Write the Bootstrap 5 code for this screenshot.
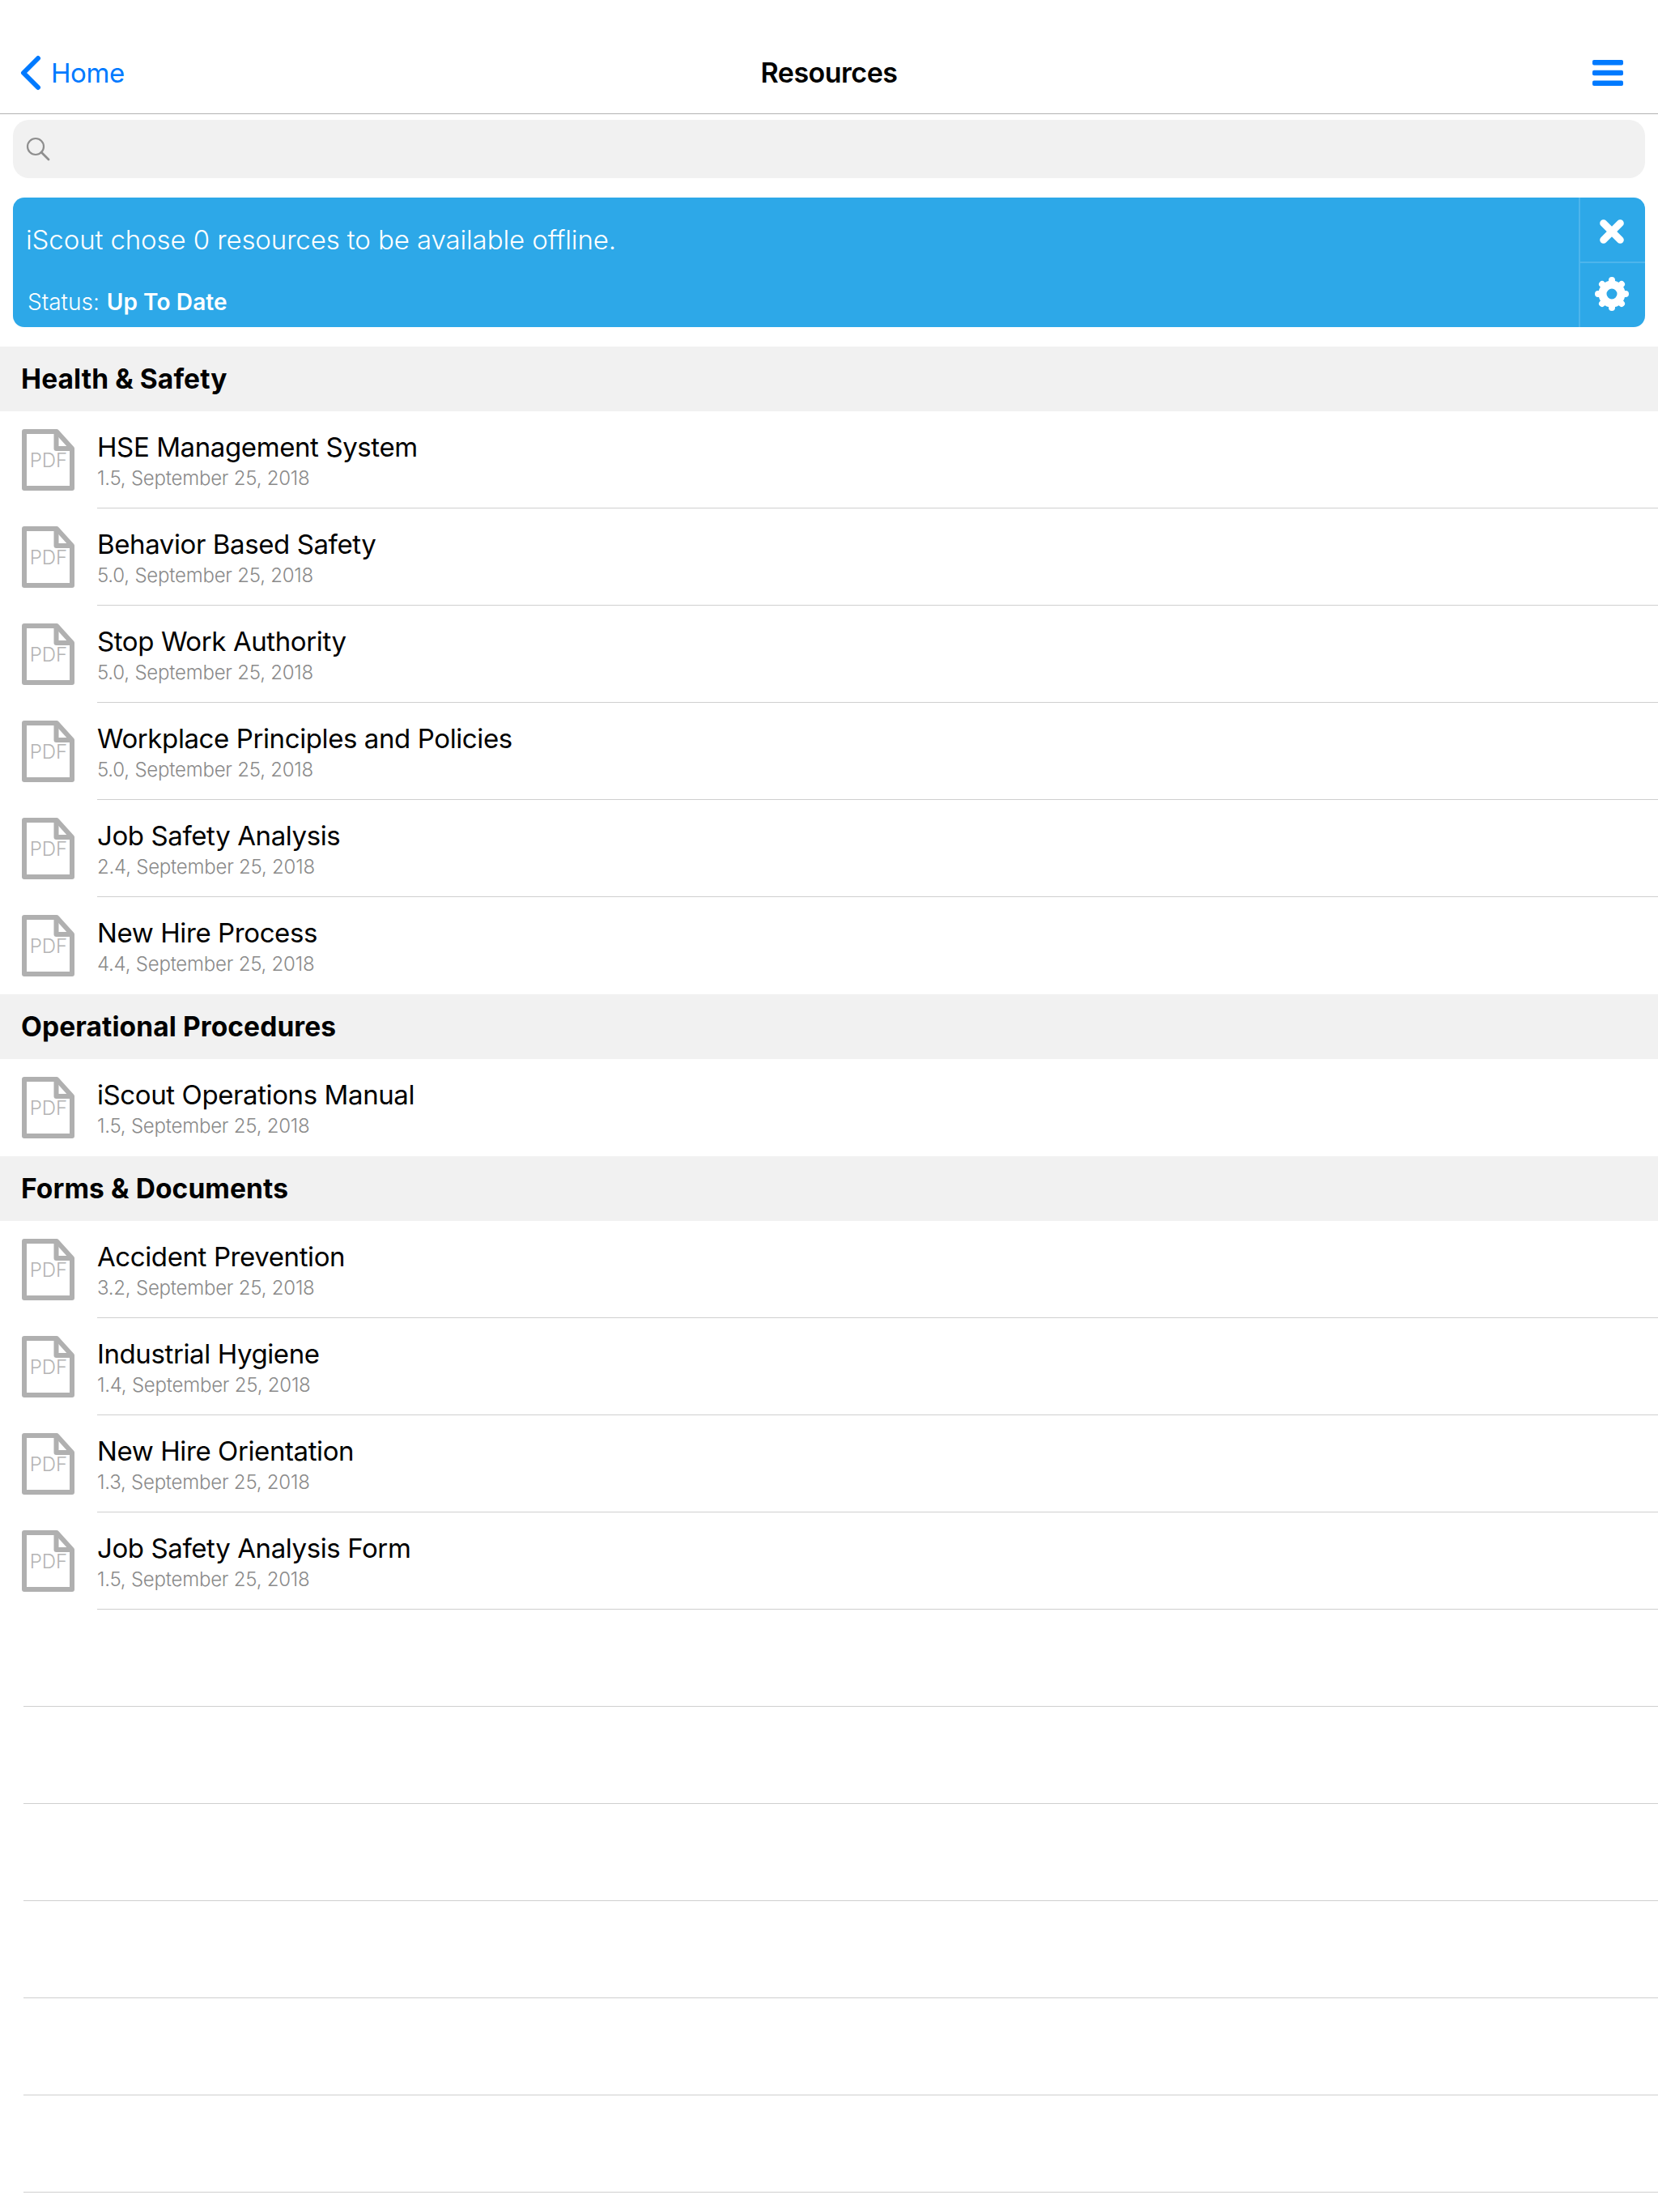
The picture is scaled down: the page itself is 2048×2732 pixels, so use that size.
<!DOCTYPE html>
<html lang="en">
<head>
<meta charset="utf-8">
<title>Resources</title>
<link href="https://cdn.jsdelivr.net/npm/bootstrap@5.3.0/dist/css/bootstrap.min.css" rel="stylesheet">
<style>
body{font-family:Inter,"Liberation Sans",sans-serif;background:#fff;color:#000;}
.top-nav{height:141px;padding:40px 43px 0 24px;border-bottom:1px solid #b2b2b2;}
.back-link{color:#007aff;font-size:33px;text-decoration:none;letter-spacing:-.4px;line-height:1;gap:11px;}
.nav-title{font-size:34px;font-weight:600;letter-spacing:-.5px;line-height:1;left:0;right:0;text-align:center;}
.search-box{height:72px;margin:7px 16px 0;background:#f1f1f1;border-radius:20px;padding-left:16px;}
.info-banner{height:160px;margin:24px 16px;background:#2da8e8;border-radius:14px;color:#fff;overflow:hidden;}
.banner-main{padding:32px 0 0 16px;}
.banner-title{font-size:33px;font-weight:300;line-height:40px;letter-spacing:-.1px;}
.banner-status{font-size:28px;line-height:34px;margin-top:40px;padding-left:2px;font-weight:300;}
.banner-status b{font-weight:600;margin-left:1px;letter-spacing:.1px;}
.banner-side{width:82px;border-left:2px solid #4db5ec;}
.side-btn{height:81px;padding:3px 2px 0 0;}
.side-btn+.side-btn{height:79px;padding:0 2px 3px 0;box-shadow:0 -2px 0 #4db5ec;}
.sec-head{height:80px;background:#f1f1f1;padding-left:26px;font-size:33.5px;font-weight:700;letter-spacing:.1px;}
.res-row{height:120px;padding-left:27px;}
.pdf-ico{width:66px;height:76px;flex:none;margin-right:27px;}
.pdf-ico text{font-family:Inter,"Liberation Sans",sans-serif;font-size:24px;fill:#b4b4b4;font-weight:300;}
.res-body{height:120px;border-bottom:1px solid #cfcfcf;padding-top:24px;}
.res-name{font-size:33px;line-height:40px;letter-spacing:-.4px;}
.res-meta{font-size:24px;line-height:30px;color:#8a8a8a;margin-top:4px;font-weight:300;letter-spacing:-.22px;}
.blank-row{height:120px;margin-left:29px;border-bottom:1px solid #cfcfcf;}
.res-row.last-sec .res-body{border-bottom:0;}
</style>
</head>
<body>
<nav class="top-nav d-flex align-items-center justify-content-between position-relative">
  <a class="back-link d-flex align-items-center" href="#">
    <svg width="28" height="44" viewBox="0 0 28 44"><path d="M23 4 5 22l18 18" fill="none" stroke="#007aff" stroke-width="6" stroke-linecap="round" stroke-linejoin="round"/></svg>
    <span>Home</span>
  </a>
  <div class="nav-title position-absolute">Resources</div>
  <svg width="38" height="32" viewBox="0 0 38 32"><rect y="0" width="38" height="6.500" rx="2" fill="#007aff"/><rect y="12.750" width="38" height="6.500" rx="2" fill="#007aff"/><rect y="25.500" width="38" height="6.500" rx="2" fill="#007aff"/></svg>
</nav>
<div class="search-box d-flex align-items-center">
  <svg width="30" height="30" viewBox="0 0 30 30"><circle cx="12" cy="12" r="10" fill="none" stroke="#8e8e8e" stroke-width="2.200"/><path d="M19 19l9 9" stroke="#8e8e8e" stroke-width="2.800" stroke-linecap="round"/></svg>
</div>
<div class="info-banner d-flex">
  <div class="banner-main flex-grow-1">
    <div class="banner-title">iScout chose 0 resources to be available offline.</div>
    <div class="banner-status">Status: <b>Up To Date</b></div>
  </div>
  <div class="banner-side d-flex flex-column">
    <div class="side-btn d-flex align-items-center justify-content-center">
      <svg width="32" height="32" viewBox="0 0 34 34"><path d="M6 6l22 22M28 6 6 28" stroke="#fff" stroke-width="9.500" stroke-linecap="round"/></svg>
    </div>
    <div class="side-btn d-flex align-items-center justify-content-center">
      <svg width="42" height="42" viewBox="0 0 42 42"><circle cx="21" cy="21" r="11.500" fill="none" stroke="#fff" stroke-width="10"/><g stroke="#fff" stroke-width="8" stroke-linecap="round"><path d="M21 4v4M21 34v4M4 21h4M34 21h4M9 9l3 3M30 30l3 3M33 9l-3 3M12 30l-3 3"/></g></svg>
    </div>
  </div>
</div>
<div id="list"></div>
<script>
const groups=[["Health & Safety",[["HSE Management System","1.5"],["Behavior Based Safety","5.0"],["Stop Work Authority","5.0"],["Workplace Principles and Policies","5.0"],["Job Safety Analysis","2.4"],["New Hire Process","4.4"]]],
["Operational Procedures",[["iScout Operations Manual","1.5"]]],
["Forms & Documents",[["Accident Prevention","3.2"],["Industrial Hygiene","1.4"],["New Hire Orientation","1.3"],["Job Safety Analysis Form","1.5"]]]];
const ico='<svg class="pdf-ico" viewBox="0 0 66 76"><path d="M3 3h40l19 21v49H3z" fill="#fff" stroke="#b0b0b0" stroke-width="6" stroke-linejoin="round"/><path d="M42.500 3v21H62" fill="none" stroke="#b0b0b0" stroke-width="6" stroke-linejoin="round"/><text x="33" y="47" text-anchor="middle">PDF</text></svg>';
let h='';
groups.forEach((g,gi)=>{h+=`<div class="sec-head d-flex align-items-center">${g[0].replace('&','&amp;')}</div>`;
g[1].forEach((r,ri)=>{const last=gi<2&&ri==g[1].length-1;h+=`<div class="res-row d-flex align-items-center${last?' last-sec':''}">${ico}<div class="res-body flex-grow-1"><div class="res-name">${r[0]}</div><div class="res-meta">${r[1]}, September 25, 2018</div></div></div>`;});});
for(let i=0;i<6;i++)h+='<div class="blank-row"></div>';
document.getElementById('list').innerHTML=h;
</script>
<script src="https://cdn.jsdelivr.net/npm/bootstrap@5.3.0/dist/js/bootstrap.bundle.min.js"></script>
</body>
</html>
